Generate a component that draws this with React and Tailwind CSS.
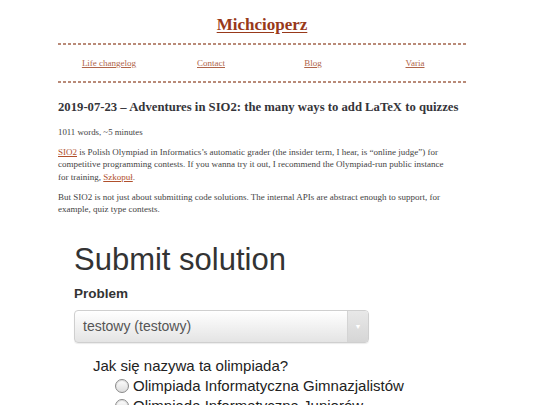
const NAV = ["Life changelog", "Contact", "Blog", "Varia"];

const serif = { fontFamily: '"Liberation Serif", "DejaVu Serif", serif' };

function Dashed() {
  return (
    <div className="h-[2px] w-full bg-[repeating-linear-gradient(90deg,#b98a78_0_3px,transparent_3px_5px)]" />
  );
}

function Radio({ label }) {
  return (
    <div className="flex items-center h-[20px] pl-[41px]">
      <span className="w-[14px] h-[14px] rounded-full border border-[#8a8a8a] bg-gradient-to-b from-white to-[#dcdcdc] shadow-[inset_0_1px_1px_rgba(0,0,0,0.15)]" />
      <span className="ml-[4px] text-[15px] leading-[20px] text-[#222]">{label}</span>
    </div>
  );
}

function SubmitShot() {
  return (
    <div
      className="mt-[27px] pl-[16px]"
      style={{ fontFamily: '"Liberation Sans", Arial, sans-serif' }}
    >
      <h2 className="text-[31px] leading-[36px] text-[#333]">Submit solution</h2>
      <div className="mt-[8px] text-[13.5px] leading-[16px] font-bold text-[#333]">Problem</div>
      <div className="mt-[8px] w-[295px] h-[33px] flex rounded-[4px] border border-[#cfcfcf] bg-gradient-to-b from-white to-[#e4e4e4] shadow-[0_1px_1px_rgba(0,0,0,0.08)] overflow-hidden">
        <div className="flex-1 flex items-center pl-[8px] text-[14px] text-[#555]">
          testowy (testowy)
        </div>
        <div className="w-[21px] flex items-center justify-center border-l border-[#d4d4d4] bg-gradient-to-b from-[#e8e8e8] to-[#d6d6d6]">
          <span className="text-[7px] text-white">▼</span>
        </div>
      </div>
      <div className="mt-[13px] pl-[19px] text-[15px] leading-[20px] text-[#222]">
        Jak się nazywa ta olimpiada?
      </div>
      <Radio label="Olimpiada Informatyczna Gimnazjalistów" />
      <Radio label="Olimpiada Informatyczna Juniorów" />
    </div>
  );
}

export default function App() {
  return (
    <div className="min-h-screen bg-white overflow-hidden">
      <div className="ml-[58px] w-[408px]">
        <div style={serif}>
          <h1 className="pt-[15px] text-center text-[17px] leading-[20px] font-bold">
            <a href="#" className="text-[#98391a] underline underline-offset-2">
              Michcioperz
            </a>
          </h1>
          <div className="mt-[8px]">
            <Dashed />
          </div>
          <nav className="grid grid-cols-4 py-[12px] text-center text-[9px] leading-[12px]">
            {NAV.map((n) => (
              <a key={n} href="#" className="text-[#b0654a] underline">
                {n}
              </a>
            ))}
          </nav>
          <Dashed />

          <h2 className="mt-[15px] text-[12.7px] leading-[18px] font-bold text-[#35353a] whitespace-nowrap">
            2019-07-23 – Adventures in SIO2: the many ways to add LaTeX to quizzes
          </h2>
          <p className="mt-[10px] text-[8.8px] leading-[12px] text-[#444]">
            1011 words, ~5 minutes
          </p>
          <p className="mt-[8px] text-[9px] leading-[12.3px] text-[#444] whitespace-nowrap">
            <a href="#" className="text-[#b0502c] underline">SIO2</a> is Polish Olympiad in
            Informatics’s automatic grader (the insider term, I hear, is “online judge”) for
            <br />
            competitive programming contests. If you wanna try it out, I recommend the
            Olympiad-run public instance
            <br />
            for training, <a href="#" className="text-[#b0502c] underline">Szkopuł</a>.
          </p>
          <p className="mt-[8px] text-[9px] leading-[12.3px] text-[#444] whitespace-nowrap">
            But SIO2 is not just about submitting code solutions. The internal APIs are
            abstract enough to support, for
            <br />
            example, quiz type contests.
          </p>
        </div>
        <SubmitShot />
      </div>
    </div>
  );
}
